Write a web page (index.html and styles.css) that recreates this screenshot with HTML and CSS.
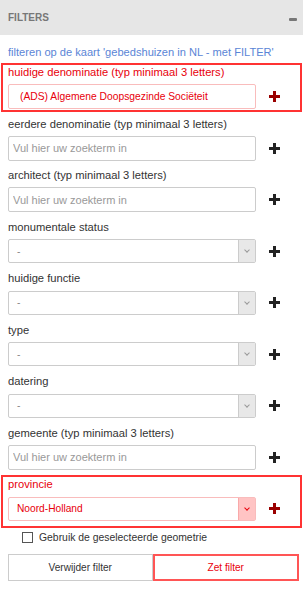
FILE: index.html
```html
<!DOCTYPE html>
<html lang="nl">
<head>
    <meta charset="UTF-8">
    <title>Filters</title>
    <link rel="stylesheet" href="styles.css">
</head>
<body>
    <div class="panel">
        <div class="panel-header">
            <span class="panel-title">FILTERS</span>
            <span class="collapse-icon"></span>
        </div>

        <div class="panel-body">
            <a class="map-link" href="#">filteren op de kaart 'gebedshuizen in NL - met FILTER'</a>

            <!-- actieve filter -->
            <div class="field active">
                <label>huidige denominatie (typ minimaal 3 letters)</label>
                <div class="field-row">
                    <input type="text" class="text-input" value="(ADS) Algemene Doopsgezinde Sociëteit">
                    <span class="add-btn"><span class="plus"></span></span>
                </div>
            </div>

            <div class="field">
                <label>eerdere denominatie (typ minimaal 3 letters)</label>
                <div class="field-row">
                    <input type="text" class="text-input" placeholder="Vul hier uw zoekterm in">
                    <span class="add-btn"><span class="plus"></span></span>
                </div>
            </div>

            <div class="field">
                <label>architect (typ minimaal 3 letters)</label>
                <div class="field-row">
                    <input type="text" class="text-input" placeholder="Vul hier uw zoekterm in">
                    <span class="add-btn"><span class="plus"></span></span>
                </div>
            </div>

            <div class="field">
                <label>monumentale status</label>
                <div class="field-row">
                    <div class="select-box"><span class="select-value">-</span><span class="select-arrow"></span></div>
                    <span class="add-btn"><span class="plus"></span></span>
                </div>
            </div>

            <div class="field">
                <label>huidige functie</label>
                <div class="field-row">
                    <div class="select-box"><span class="select-value">-</span><span class="select-arrow"></span></div>
                    <span class="add-btn"><span class="plus"></span></span>
                </div>
            </div>

            <div class="field">
                <label>type</label>
                <div class="field-row">
                    <div class="select-box"><span class="select-value">-</span><span class="select-arrow"></span></div>
                    <span class="add-btn"><span class="plus"></span></span>
                </div>
            </div>

            <div class="field">
                <label>datering</label>
                <div class="field-row">
                    <div class="select-box"><span class="select-value">-</span><span class="select-arrow"></span></div>
                    <span class="add-btn"><span class="plus"></span></span>
                </div>
            </div>

            <div class="field">
                <label>gemeente (typ minimaal 3 letters)</label>
                <div class="field-row">
                    <input type="text" class="text-input" placeholder="Vul hier uw zoekterm in">
                    <span class="add-btn"><span class="plus"></span></span>
                </div>
            </div>

            <!-- actieve filter -->
            <div class="field active last">
                <label>provincie</label>
                <div class="field-row">
                    <div class="select-box"><span class="select-value">Noord-Holland</span><span class="select-arrow"></span></div>
                    <span class="add-btn"><span class="plus"></span></span>
                </div>
            </div>

            <label class="geometry-check">
                <span class="checkbox"></span>
                Gebruik de geselecteerde geometrie
            </label>

            <div class="actions">
                <button class="btn">Verwijder filter</button>
                <button class="btn btn-primary">Zet filter</button>
            </div>
        </div>
    </div>
</body>
</html>
```

FILE: styles.css
```css
/* Basis */
body {
    margin: 0;
    background-color: #fff;
    font-family: 'Liberation Sans', Arial, sans-serif;
    font-size: 11.2px;
    color: #333;
}

.panel {
    width: 303px;
    height: 607px;
    background-color: #fff;
}

.panel-header {
    height: 35px;
    background-color: #e6e6e6;
    display: flex;
    justify-content: space-between;
    align-items: center;
    padding: 0 6px 0 8px;
}

.panel-title {
    font-size: 10px;
    font-weight: bold;
    color: #777;
}

.collapse-icon {
    width: 8px;
    height: 3px;
    background-color: #777;
    border-radius: 1px;
    margin-top: 4px;
}

.panel-body {
    padding: 8px 1px 0 1px;
}

.map-link {
    display: block;
    color: #5a85d6;
    text-decoration: none;
    margin: 0 0 2px 7px;
    font-size: 11.1px;
    line-height: 18px;
}

/* Velden */
.field {
    border: 2px solid transparent;
    padding: 0 5px 1px 5px;
    margin-bottom: 2.5px;
}

.field.active {
    border-color: #f33;
}

.field.last {
    padding-bottom: 5px;
}

.field label {
    display: block;
    line-height: 14px;
    margin-bottom: 5px;
    color: #333;
}

.field.active label {
    color: #e8000b;
}

.field-row {
    display: flex;
    align-items: center;
}

.text-input {
    box-sizing: border-box;
    width: 248px;
    height: 25px;
    border: 1px solid #ccc;
    border-radius: 2px;
    padding: 0 4px;
    font-family: inherit;
    font-size: 11px;
    color: #333;
    outline: none;
}

.text-input::placeholder {
    color: #999;
}

.field.active .text-input {
    border-color: #f9bcbc;
    color: #e8000b;
    font-size: 10.3px;
    padding: 0 11px;
}

.select-box {
    box-sizing: border-box;
    width: 248px;
    height: 24px;
    margin: 0.5px 0;
    border: 1px solid #ccc;
    border-radius: 2px;
    display: flex;
    align-items: center;
    justify-content: space-between;
}

.select-value {
    padding-left: 8px;
    font-size: 10.2px;
    color: #888;
}

.select-arrow {
    width: 16px;
    height: 100%;
    background-color: #e8e8e8;
    border-left: 1px solid #ccc;
    position: relative;
}

.select-arrow::after {
    content: "";
    position: absolute;
    left: 6px;
    top: 8px;
    width: 3px;
    height: 3px;
    border-right: 1px solid #999;
    border-bottom: 1px solid #999;
    transform: rotate(45deg);
}

.field.active .select-box {
    border-color: #f9bcbc;
}

.field.active .select-value {
    color: #e8000b;
}

.field.active .select-arrow {
    background-color: #ffc4c4;
    border-left-color: #f9a9a9;
}

.field.active .select-arrow::after {
    border-color: #e8000b;
}

.add-btn {
    width: 36px;
    display: flex;
    justify-content: center;
    align-items: center;
}

.plus {
    width: 11px;
    height: 11px;
    position: relative;
}

.plus::before,
.plus::after {
    content: "";
    position: absolute;
    background-color: #222;
}

.plus::before {
    left: 0;
    top: 4px;
    width: 11px;
    height: 3px;
}

.plus::after {
    left: 4px;
    top: 0;
    width: 3px;
    height: 11px;
}

.field.active .plus::before,
.field.active .plus::after {
    background-color: #9a0000;
}

/* Onderkant */
.geometry-check {
    display: flex;
    align-items: center;
    margin: 3.5px 0 0 21px;
    font-size: 10.4px;
    line-height: 12px;
    color: #333;
}

.checkbox {
    box-sizing: border-box;
    width: 11px;
    height: 11px;
    border: 1px solid #555;
    margin-right: 6px;
}

.actions {
    display: flex;
    margin: 10px 3px 0 7px;
}

.btn {
    flex: 1;
    height: 27px;
    background-color: #fff;
    border: 1px solid #ccc;
    font-family: inherit;
    font-size: 10.1px;
    color: #333;
    cursor: pointer;
}

.btn-primary {
    border: 2px solid #f55;
    color: #e8000b;
}
```
